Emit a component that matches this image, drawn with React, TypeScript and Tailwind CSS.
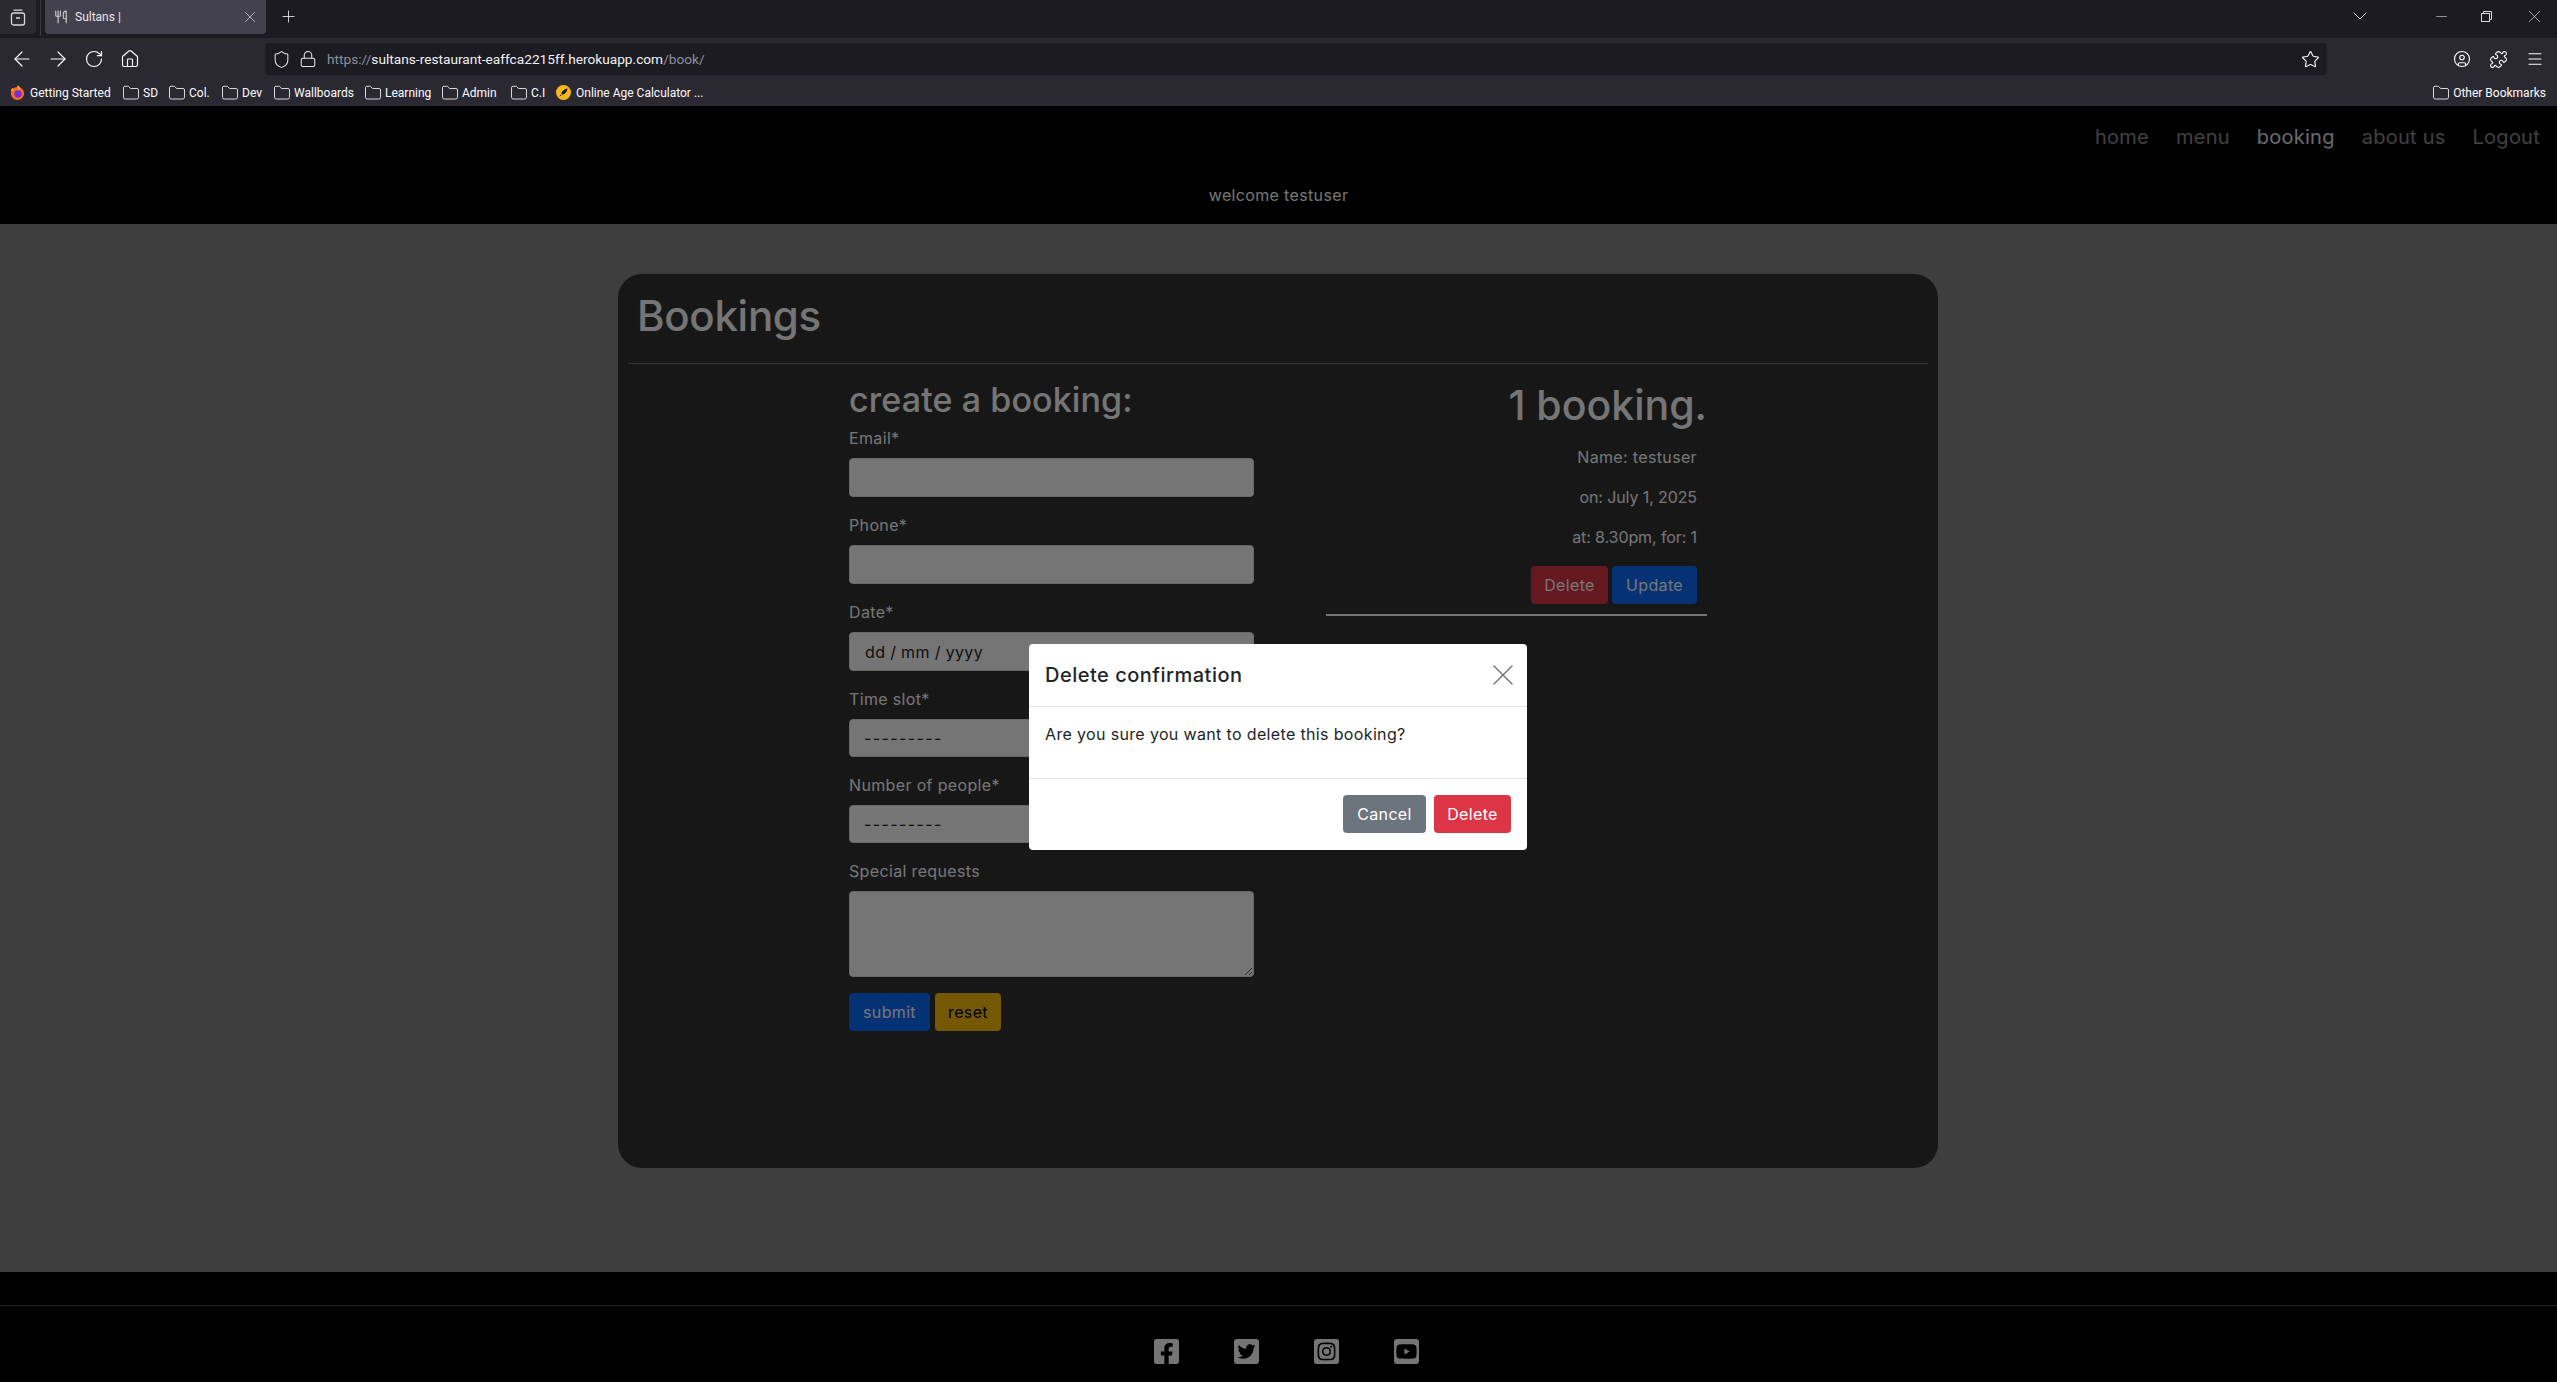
import React from 'react';
import { ArrowLeft, ArrowRight, RotateCw, Home, Shield, Lock, Star, CircleUser, Puzzle, Menu, Folder, Plus, X, ChevronDown, Minus, Utensils } from 'lucide-react';
import { FaFacebookSquare, FaTwitterSquare, FaInstagramSquare, FaYoutubeSquare } from 'react-icons/fa';

const bookmarks = [
  { label: 'SD', w: 'w-[46px]' },
  { label: 'Col.', w: 'w-[53px]' },
  { label: 'Dev', w: 'w-[52px]' },
  { label: 'Wallboards', w: 'w-[91px]' },
  { label: 'Learning', w: 'w-[77px]' },
  { label: 'Admin', w: 'w-[69px]' },
  { label: 'C.I', w: 'w-[46px]' },
];

const BrowserChrome = () => (
  <div className="h-[106px] shrink-0 bg-[#2a2932] text-[#fbfbfe] font-['Roboto',sans-serif] tracking-normal">
    {/* tab strip */}
    <div className="h-[38px] bg-[#1c1b22] flex items-start">
      <div className="w-[36px] h-[34px] bg-[#2b2a33] rounded-br flex items-center justify-center">
        <svg width="16" height="17" viewBox="0 0 16 17" fill="none" stroke="#d8d8dc" strokeWidth="1.3">
          <rect x="1.5" y="4" width="13" height="12" rx="2" />
          <path d="M3.5 1.2h9M6 9h4" />
        </svg>
      </div>
      <div className="w-px h-[36px] bg-[#3a3944] ml-[4px]" />
      <div className="ml-[4px] w-[221px] h-[34px] bg-[#42414d] rounded-b flex items-center pl-[9px] pr-[7px]">
        <Utensils size={14} strokeWidth={2} className="text-[#c9c9c9]" />
        <span className="ml-[7px] text-[12px] text-[#e8e8ea]">Sultans |</span>
        <X size={18} strokeWidth={1} className="ml-auto text-[#d8d8dc]" />
      </div>
      <Plus size={19} strokeWidth={1.1} className="ml-[13px] mt-[7px] text-[#e8e8ea]" />
      <div className="ml-auto flex items-center h-[32px]">
        <ChevronDown size={24} strokeWidth={1} className="text-[#d8d8dc] mr-[61px]" />
        <Minus size={17} strokeWidth={0.9} className="text-[#d8d8dc] mr-[31px]" />
        <svg width="11" height="11" viewBox="0 0 11 11" fill="none" stroke="#d8d8dc" strokeWidth="1" className="mr-[32px]">
          <rect x="0.5" y="2.5" width="8" height="8" />
          <path d="M2.5 2.500v-2h8v8h-2" />
        </svg>
        <X size={21} strokeWidth={0.8} className="text-[#d8d8dc] mr-[12px]" />
      </div>
    </div>
    {/* toolbar */}
    <div className="h-[38px] pt-[4px] flex items-center pl-[10px]">
      <div className="flex gap-[12px] items-center">
        <ArrowLeft size={24} strokeWidth={1.2} />
        <ArrowRight size={24} strokeWidth={1.2} />
        <div className="w-[24px] flex justify-center"><RotateCw size={20} strokeWidth={1.4} /></div>
        <div className="w-[24px] flex justify-center"><Home size={20} strokeWidth={1.4} /></div>
      </div>
      <div className="ml-[123px] w-[2062px] h-[32px] bg-[#1c1b22] rounded flex items-center pl-[7px] pr-[7px]">
        <Shield size={19} strokeWidth={1.3} className="text-[#e4e4e6]" />
        <Lock size={18} strokeWidth={1.4} className="ml-[8px] text-[#e4e4e6]" />
        <span className="ml-[10px] text-[13.7px] text-[#f0f0f3]">
          <span className="text-[#8f8f9d]">https://</span>sultans-restaurant-eaffca2215ff.herokuapp.com<span className="text-[#8f8f9d]">/book/</span>
        </span>
        <Star size={19} strokeWidth={1.4} className="ml-auto" />
      </div>
      <div className="ml-[126px] flex items-center gap-[18px]">
        <CircleUser size={18} strokeWidth={1.5} />
        <Puzzle size={19} strokeWidth={1.4} />
        <Menu size={18} strokeWidth={1.5} />
      </div>
    </div>
    {/* bookmarks */}
    <div className="h-[30px] pt-[3px] flex items-center pl-[10px] text-[12px]">
      <svg width="15" height="16" viewBox="0 0 16 16" className="mr-[5px]">
        <circle cx="8" cy="8.5" r="7" fill="#ff6a2b" />
        <path d="M8 0.5c2 1.5 2 3 1.5 4M1.5 6 3 3" stroke="#ffb02e" strokeWidth="1.6" fill="none" />
        <circle cx="8.5" cy="9" r="4" fill="#7b2fd0" />
      </svg>
      <span className="w-[92px]">Getting Started</span>
      {bookmarks.map((b) => (
        <div key={b.label} className={`flex items-center gap-[3px] ${b.w}`}>
          <Folder size={18} strokeWidth={1.1} />
          <span>{b.label}</span>
        </div>
      ))}
      <div className="flex items-center gap-[5px]">
        <div className="w-[15px] h-[15px] rounded-full bg-[#f5b81c] flex items-center justify-center">
          <svg width="9" height="9" viewBox="0 0 10 10"><path d="M9.5.5C6 1 3.500 3 2.500 6l1.500 1.500C7 6.500 9 4 9.500.5zM2 7 .5 9.500 3 8z" fill="#1c1b22" /></svg>
        </div>
        <span>Online Age Calculator ...</span>
      </div>
      <div className="ml-auto mr-[11px] flex items-center gap-[3px]">
        <Folder size={18} strokeWidth={1.1} />
        <span>Other Bookmarks</span>
      </div>
    </div>
  </div>
);

const Navbar = () => (
  <div className="h-[118px] shrink-0 bg-black">
    <div className="flex justify-end gap-[27px] pr-[17px] pt-[17px] text-[20px] leading-[28px] text-white/55 tracking-[0.25px]">
      <a>home</a>
      <a>menu</a>
      <a className="text-white/90">booking</a>
      <a>about us</a>
      <a>Logout</a>
    </div>
    <p className="mt-[32px] text-center text-[16px] leading-[24px] text-white">welcome testuser</p>
  </div>
);

const inputClass = "block w-full h-[39px] bg-white border border-[#dee2e6] rounded px-[15px] text-[#212529] text-[16px] mb-[16px]";
const selectClass = "block w-full h-[38px] bg-white border border-[#dee2e6] rounded px-[14px] text-[#212529] text-[16px] tracking-[1.4px] mb-[16px] appearance-none";
const labelClass = "block h-[24px] mb-[8px] text-[16px] leading-[24px]";

const BookingForm = () => (
  <form className="w-[405px] pt-[15px]">
    <h3 className="h-[47px] pt-[1px] text-[34px] leading-[40px] font-medium tracking-[0.1px]">create a booking:</h3>
    <label className={labelClass}>Email*</label>
    <input className={inputClass} />
    <label className={labelClass}>Phone*</label>
    <input className={inputClass} />
    <label className={labelClass}>Date*</label>
    <input className={inputClass} defaultValue="dd / mm / yyyy" />
    <label className={labelClass}>Time slot*</label>
    <select className={selectClass}>
      <option>---------</option>
    </select>
    <label className={labelClass}>Number of people*</label>
    <select className={selectClass}>
      <option>---------</option>
    </select>
    <label className={labelClass}>Special requests</label>
    <textarea className="block w-full h-[86px] bg-white border border-[#dee2e6] rounded mb-[16px]" />
    <div className="flex gap-[5px]">
      <button type="button" className="w-[81px] h-[38px] rounded bg-[#0d6efd] text-white text-[16px]">submit</button>
      <button type="button" className="w-[66px] h-[38px] rounded bg-[#ffc107] text-black text-[16px]">reset</button>
    </div>
  </form>
);

const BookingList = () => (
  <div className="w-[381px] pt-[15px] text-right">
    <h2 className="h-[66px] pt-[2px] text-[41px] leading-[48px] font-medium tracking-[0px]">1 booking.</h2>
    <div className="pr-[10px]">
      <p className="h-[24px] mb-[16px] text-[16px] leading-[24px]">Name: testuser</p>
      <p className="h-[24px] mb-[16px] text-[16px] leading-[24px] tracking-[-0.1px]">on: July 1, 2025</p>
      <p className="h-[24px] mb-[17px] text-[16px] leading-[24px] tracking-[-0.1px]">at: 8.30pm, for: 1</p>
      <div className="flex justify-end gap-[4px]">
        <button className="w-[77px] h-[38px] rounded bg-[#dc3545] text-white text-[16px]">Delete</button>
        <button className="w-[85px] h-[38px] rounded bg-[#0d6efd] text-white text-[16px]">Update</button>
      </div>
    </div>
    <hr className="mt-[10px] border-0 h-[2px] bg-white" />
  </div>
);

const Footer = () => (
  <div className="h-[110px] shrink-0 bg-black pt-[33px]">
    <div className="border-t border-white/30" />
    <div className="flex justify-center gap-[55px] pt-[31px] pl-[15px] text-white">
      <FaFacebookSquare className="w-[25px] h-[29px]" />
      <FaTwitterSquare className="w-[25px] h-[29px]" />
      <FaInstagramSquare className="w-[25px] h-[29px]" />
      <FaYoutubeSquare className="w-[25px] h-[29px]" />
    </div>
  </div>
);

const DeleteModal = () => (
  <div className="absolute inset-x-0 top-[106px] bottom-0 bg-[rgba(0,0,0,0.54)] flex justify-center pt-[538px] pr-[1px]">
    <div className="w-[498px] h-[206px] bg-white rounded text-[#212529]">
      <div className="h-[63px] border-b border-[#dee2e6] flex items-center justify-between pl-[16px] pr-[6px]">
        <h5 className="text-[20px] font-medium tracking-[0.5px] -mt-[1px]">Delete confirmation</h5>
        <X size={36} strokeWidth={1} className="text-[#777]" />
      </div>
      <div className="h-[72px] border-b border-[#dee2e6] pl-[16px] pt-[15px] text-[16px] leading-[24px]">
        Are you sure you want to delete this booking?
      </div>
      <div className="flex justify-end gap-[8px] pt-[16px] pr-[16px]">
        <button className="w-[83px] h-[38px] rounded bg-[#6c757d] text-white text-[16px]">Cancel</button>
        <button className="w-[77px] h-[38px] rounded bg-[#dc3545] text-white text-[16px]">Delete</button>
      </div>
    </div>
  </div>
);

const App = () => (
  <div className="relative h-[1382px] overflow-hidden flex flex-col bg-[#888888] font-['Inter',sans-serif] tracking-[0.35px]">
    <BrowserChrome />
    <Navbar />
    <main className="flex-1 pt-[50px] pr-[1px]">
      <div className="mx-auto w-[1320px] h-[894px] rounded-[24px] bg-[#343434] text-white px-[10px]">
        <div className="h-[90px] border-b border-white/30 pl-[9px] pt-[18px]">
          <h1 className="text-[42px] leading-[48px] font-medium tracking-[-0.3px]">Bookings</h1>
        </div>
        <div className="flex justify-center gap-[72px]">
          <BookingForm />
          <BookingList />
        </div>
      </div>
    </main>
    <Footer />
    <DeleteModal />
  </div>
);

export default App;
